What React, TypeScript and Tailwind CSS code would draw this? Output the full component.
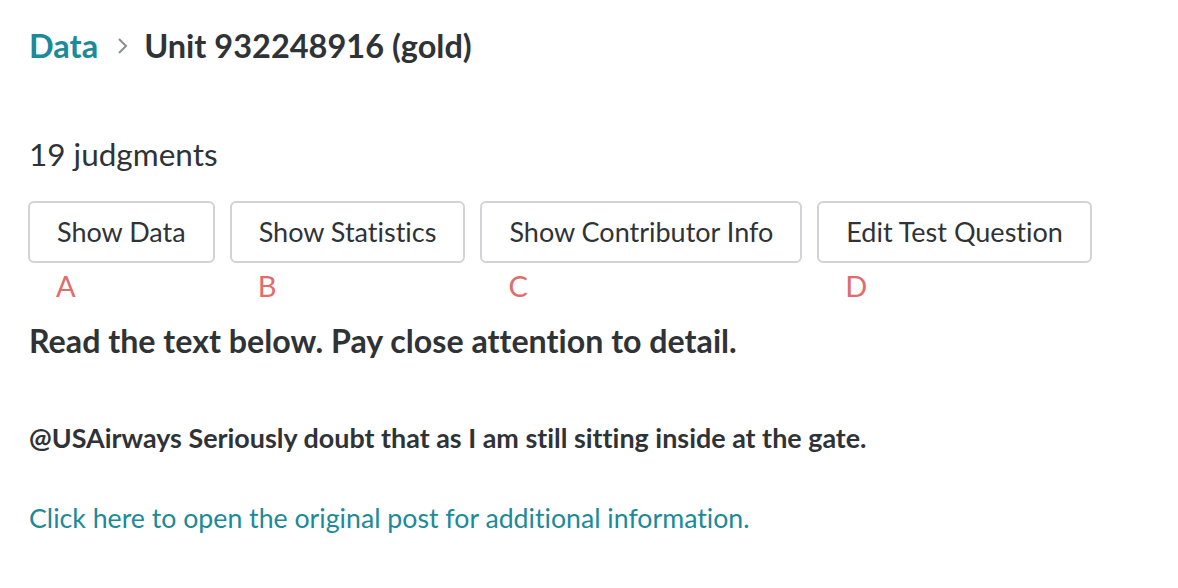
import React from 'react';

const buttons = [
  { label: 'Show Data', letter: 'A' },
  { label: 'Show Statistics', letter: 'B' },
  { label: 'Show Contributor Info', letter: 'C' },
  { label: 'Edit Test Question', letter: 'D' },
];

export default function App() {
  return (
    <div className="min-h-screen bg-white text-[#2f3336] px-[29px] pt-[28px] [font-variant-ligatures:none]" style={{ fontFamily: 'Lato, "Noto Sans", sans-serif' }}>
      <div className="flex items-center text-[32.5px] font-bold leading-[36px]">
        <span className="text-[#1b8a99]">Data</span>
        <svg className="ml-[19px] mr-[15px] text-[#8a8f93]" width="12" height="18" viewBox="0 0 12 18" fill="none">
          <path d="M2 2l7 7-7 7" stroke="currentColor" strokeWidth="2" />
        </svg>
        <span>Unit 932248916 (gold)</span>
      </div>

      <div className="mt-[72px] text-[31.5px] leading-[36px]">19 judgments</div>

      <div className="mt-[29px] -ml-px flex gap-[15px]">
        {buttons.map((b) => (
          <div key={b.label} className="flex flex-col">
            <button className="h-[62px] px-[27px] rounded-[6px] border-2 border-[#d2d3d6] bg-white text-[27px] text-[#2f3336]">
              {b.label}
            </button>
            <span className="pl-[28px] mt-[6px] text-[29px] leading-[34px] text-[#e06c6c]">{b.letter}</span>
          </div>
        ))}
      </div>

      <h1 className="mt-[19px] text-[32.2px] font-bold leading-[38px]">Read the text below. Pay close attention to detail.</h1>

      <p className="mt-[62px] text-[26.9px] font-bold leading-[32px]">
        @USAirways Seriously doubt that as I am still sitting inside at the gate.
      </p>

      <a className="block mt-[48px] text-[26.7px] leading-[32px] text-[#1b8a99]" href="#">
        Click here to open the original post for additional information.
      </a>
    </div>
  );
}
